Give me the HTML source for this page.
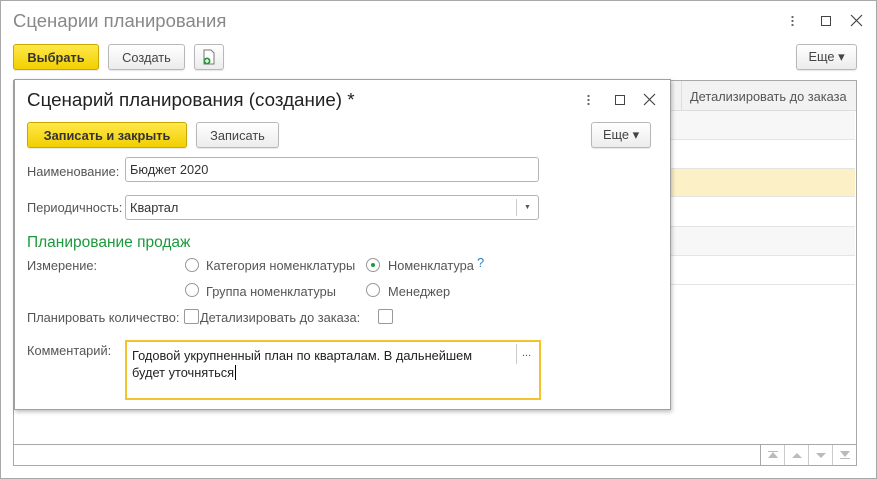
<!DOCTYPE html>
<html><head><meta charset="utf-8"><style>
*{box-sizing:border-box}
body{margin:0;width:877px;height:479px;background:#fff;font-family:"Liberation Sans",sans-serif;font-size:12.8px;color:#4d4d4d;position:relative;overflow:hidden}
.abs{position:absolute}
.outer{left:0;top:0;width:877px;height:479px;border:1px solid #a8a8a8}
.btn{position:absolute;height:26px;border:1px solid #b8b8b8;border-radius:3px;background:linear-gradient(#fff,#ececec);display:flex;align-items:center;justify-content:center;color:#444;font-size:12.8px;box-shadow:0 1px 1px rgba(0,0,0,.1)}
.yel{background:linear-gradient(#ffe84a,#f2cf00);border-color:#c9a900;color:#333;font-weight:bold}
.inp{position:absolute;border:1px solid #b5b5b5;border-radius:3px;background:#fff;color:#333;padding-left:4px;display:flex;align-items:center}
.lbl{position:absolute;color:#555}
.rad{position:absolute;width:14px;height:14px;border:1px solid #999;border-radius:50%;background:#fff}
.chk{position:absolute;width:15px;height:15px;border:1px solid #999;border-radius:2px;background:#fff}
.row{position:absolute;left:14px;width:841px;border-bottom:1px solid #e4e4e4}
.x{position:absolute;width:14px;height:14px}
</style></head><body>
<div class="abs outer"></div>
<div class="abs" style="left:13px;top:10px;font-size:18.5px;color:#888">Сценарии планирования</div>
<div class="abs" style="left:791px;top:15px;width:3px;height:12px;background:radial-gradient(circle,#666 1px,transparent 1.3px) 0 0/3px 4px"></div>
<div class="abs" style="left:821px;top:16px;width:10px;height:10px;border:1.5px solid #444"></div>
<svg class="x" style="left:850px;top:14px" viewBox="0 0 14 14"><path d="M1 1L12 12M12 1L1 12" stroke="#444" stroke-width="1.2"/></svg>
<div class="btn yel" style="left:13px;top:44px;width:86px">Выбрать</div>
<div class="btn" style="left:108px;top:44px;width:77px">Создать</div>
<div class="btn" style="left:194px;top:44px;width:30px"><svg width="14" height="16" viewBox="0 0 14 16"><path d="M2 1h7l3 3v11H2z" fill="#fff" stroke="#777"/><circle cx="5" cy="12" r="3.5" fill="#2a9a3a"/><path d="M3 12h4M5 10v4" stroke="#fff" stroke-width="1.3"/></svg></div>
<div class="btn" style="left:796px;top:44px;width:61px">Еще ▾</div>
<div class="abs" style="left:13px;top:80px;width:844px;height:386px;border:1px solid #a8a8a8"></div>
<div class="abs" style="left:14px;top:81px;width:842px;height:30px;background:#f2f2f2;border-bottom:1px solid #ddd"></div>
<div class="abs" style="left:681px;top:81px;width:1px;height:30px;background:#ddd"></div>
<div class="abs" style="left:690px;top:89px;color:#555;font-size:12.8px">Детализировать до заказа</div>
<div class="row" style="top:111px;height:29px;background:#f7f7f7"></div>
<div class="row" style="top:140px;height:29px"></div>
<div class="row" style="top:169px;height:28px;background:#fcf0c6"></div>
<div class="row" style="top:197px;height:30px"></div>
<div class="row" style="top:227px;height:29px;background:#f7f7f7"></div>
<div class="row" style="top:256px;height:29px"></div>
<div class="abs" style="left:14px;top:444px;width:842px;height:1px;background:#a8a8a8"></div>
<div class="abs" style="left:760px;top:444px;width:97px;height:22px;border:1px solid #a8a8a8;display:flex">
<div style="flex:1;border-right:1px solid #ccc;position:relative"><svg width="10" height="8" style="position:absolute;left:7px;top:6px"><path d="M0 0.5h10" stroke="#bbb"/><path d="M5 1L10 7H0z" fill="#bbb"/></svg></div>
<div style="flex:1;border-right:1px solid #ccc;position:relative"><svg width="10" height="8" style="position:absolute;left:7px;top:7px"><path d="M5 1L10 6H0z" fill="#bbb"/></svg></div>
<div style="flex:1;border-right:1px solid #ccc;position:relative"><svg width="10" height="8" style="position:absolute;left:7px;top:7px"><path d="M5 6L10 1H0z" fill="#bbb"/></svg></div>
<div style="flex:1;position:relative"><svg width="10" height="8" style="position:absolute;left:7px;top:6px"><path d="M0 7.5h10" stroke="#bbb"/><path d="M5 6L10 0H0z" fill="#bbb"/></svg></div></div>
<div class="abs" style="left:14px;top:79px;width:657px;height:331px;background:#fff;border:1px solid #a0a0a0;box-shadow:1px 2px 4px rgba(0,0,0,.25)"></div>
<div class="abs" style="left:27px;top:89px;font-size:18.8px;color:#222">Сценарий планирования (создание) *</div>
<div class="abs" style="left:587px;top:94px;width:3px;height:12px;background:radial-gradient(circle,#666 1px,transparent 1.3px) 0 0/3px 4px"></div>
<div class="abs" style="left:615px;top:95px;width:10px;height:10px;border:1.5px solid #444"></div>
<svg class="x" style="left:643px;top:93px" viewBox="0 0 14 14"><path d="M1 1L12 12M12 1L1 12" stroke="#444" stroke-width="1.2"/></svg>
<div class="btn yel" style="left:27px;top:122px;width:160px">Записать и закрыть</div>
<div class="btn" style="left:196px;top:122px;width:83px">Записать</div>
<div class="btn" style="left:591px;top:122px;width:60px">Еще ▾</div>
<div class="lbl" style="left:27px;top:164px">Наименование:</div>
<div class="inp" style="left:125px;top:157px;width:414px;height:25px">Бюджет 2020</div>
<div class="lbl" style="left:27px;top:200px">Периодичность:</div>
<div class="inp" style="left:125px;top:195px;width:414px;height:25px">Квартал<div style="position:absolute;right:0;top:3px;width:22px;height:17px;border-left:1px solid #ccc;text-align:center;font-size:7px;line-height:17px;color:#555">▼</div></div>
<div class="abs" style="left:27px;top:234px;font-size:15.5px;color:#1a9a3a">Планирование продаж</div>
<div class="lbl" style="left:27px;top:258px">Измерение:</div>
<div class="rad" style="left:185px;top:258px"></div><div class="lbl" style="left:206px;top:258px">Категория номенклатуры</div>
<div class="rad" style="left:366px;top:258px"><div style="width:4px;height:4px;background:#1a9a3a;border-radius:50%;margin:4px"></div></div><div class="lbl" style="left:388px;top:258px">Номенклатура</div>
<div class="abs" style="left:477px;top:255px;color:#2b7ec4">?</div>
<div class="rad" style="left:185px;top:283px"></div><div class="lbl" style="left:206px;top:284px">Группа номенклатуры</div>
<div class="rad" style="left:366px;top:283px"></div><div class="lbl" style="left:388px;top:284px">Менеджер</div>
<div class="lbl" style="left:27px;top:310px">Планировать количество:</div>
<div class="chk" style="left:184px;top:309px"></div>
<div class="lbl" style="left:200px;top:310px">Детализировать до заказа:</div>
<div class="chk" style="left:378px;top:309px"></div>
<div class="lbl" style="left:27px;top:343px">Комментарий:</div>
<div class="abs" style="left:125px;top:340px;width:416px;height:60px;border:2px solid #f2c32d;background:#fff"></div>
<div class="abs" style="left:132px;top:347px;color:#222;line-height:17px">Годовой укрупненный план по кварталам. В дальнейшем<br>будет уточняться<span style="border-left:1px solid #000;margin-left:1px"></span></div>
<div class="abs" style="left:516px;top:344px;width:1px;height:20px;background:#ccc"></div>
<div class="abs" style="left:522px;top:347px;color:#555;font-size:11px">...</div>
</body></html>
